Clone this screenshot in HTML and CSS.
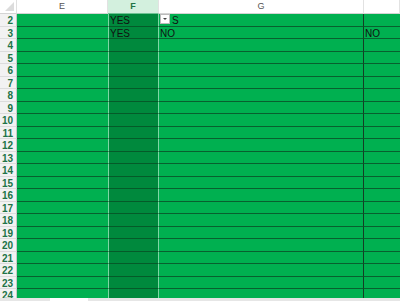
FILE: index.html
```html
<!DOCTYPE html>
<html lang="en">

<head>
    <meta charset="UTF-8">
    <title>Sheet</title>
    <link rel="stylesheet" href="styles.css">
</head>

<body>
    <div class="sheet">
        <div class="grid">
            <div class="row head">
                <div class="corner"><span class="tri"></span></div>
                <div class="col">E</div>
                <div class="col sel">F</div>
                <div class="col">G</div>
                <div class="col"></div>
            </div>
            <div class="row">
                <div class="rh">2</div>
                <div class="c"></div>
                <div class="c f">YES</div>
                <div class="c g"><span class="drop"><span class="arrow"></span></span>S</div>
                <div class="c"></div>
            </div>
            <div class="row">
                <div class="rh">3</div>
                <div class="c"></div>
                <div class="c f">YES</div>
                <div class="c g">NO</div>
                <div class="c">NO</div>
            </div>
            <div class="row"><div class="rh">4</div><div class="c"></div><div class="c f"></div><div class="c g"></div><div class="c"></div></div>
            <div class="row"><div class="rh">5</div><div class="c"></div><div class="c f"></div><div class="c g"></div><div class="c"></div></div>
            <div class="row"><div class="rh">6</div><div class="c"></div><div class="c f"></div><div class="c g"></div><div class="c"></div></div>
            <div class="row"><div class="rh">7</div><div class="c"></div><div class="c f"></div><div class="c g"></div><div class="c"></div></div>
            <div class="row"><div class="rh">8</div><div class="c"></div><div class="c f"></div><div class="c g"></div><div class="c"></div></div>
            <div class="row"><div class="rh">9</div><div class="c"></div><div class="c f"></div><div class="c g"></div><div class="c"></div></div>
            <div class="row"><div class="rh">10</div><div class="c"></div><div class="c f"></div><div class="c g"></div><div class="c"></div></div>
            <div class="row"><div class="rh">11</div><div class="c"></div><div class="c f"></div><div class="c g"></div><div class="c"></div></div>
            <div class="row"><div class="rh">12</div><div class="c"></div><div class="c f"></div><div class="c g"></div><div class="c"></div></div>
            <div class="row"><div class="rh">13</div><div class="c"></div><div class="c f"></div><div class="c g"></div><div class="c"></div></div>
            <div class="row"><div class="rh">14</div><div class="c"></div><div class="c f"></div><div class="c g"></div><div class="c"></div></div>
            <div class="row"><div class="rh">15</div><div class="c"></div><div class="c f"></div><div class="c g"></div><div class="c"></div></div>
            <div class="row"><div class="rh">16</div><div class="c"></div><div class="c f"></div><div class="c g"></div><div class="c"></div></div>
            <div class="row"><div class="rh">17</div><div class="c"></div><div class="c f"></div><div class="c g"></div><div class="c"></div></div>
            <div class="row"><div class="rh">18</div><div class="c"></div><div class="c f"></div><div class="c g"></div><div class="c"></div></div>
            <div class="row"><div class="rh">19</div><div class="c"></div><div class="c f"></div><div class="c g"></div><div class="c"></div></div>
            <div class="row"><div class="rh">20</div><div class="c"></div><div class="c f"></div><div class="c g"></div><div class="c"></div></div>
            <div class="row"><div class="rh">21</div><div class="c"></div><div class="c f"></div><div class="c g"></div><div class="c"></div></div>
            <div class="row"><div class="rh">22</div><div class="c"></div><div class="c f"></div><div class="c g"></div><div class="c"></div></div>
            <div class="row"><div class="rh">23</div><div class="c"></div><div class="c f"></div><div class="c g"></div><div class="c"></div></div>
            <div class="row"><div class="rh">24</div><div class="c"></div><div class="c f"></div><div class="c g"></div><div class="c"></div></div>
        </div>
        <div class="tabs"><span class="tab"></span></div>
    </div>
</body>

</html>
```

FILE: styles.css
```css
body {
    margin: 0;
    font-family: "Liberation Sans", Arial, sans-serif;
    background: #fff;
    overflow: hidden;
}

.sheet {
    width: 400px;
    height: 301px;
    display: flex;
    flex-direction: column;
}

.grid {
    height: 298px;
    overflow: hidden;
    flex: none;
}

.row {
    display: grid;
    grid-template-columns: 17px 91px 51px 205px 36px;
    grid-template-rows: 100%;
    height: 12px;
}

.row:nth-child(even) {
    height: 13px;
}

.row.head {
    height: 14px;
    background: #fff;
}

.corner {
    position: relative;
    border-right: 1px solid #e0e0e0;
    border-bottom: 1px solid #d4d4d4;
}

.tri {
    position: absolute;
    right: 2px;
    bottom: 2px;
    width: 0;
    height: 0;
    border-left: 9px solid transparent;
    border-bottom: 9px solid #dcdcdc;
}

.col {
    box-sizing: border-box;
    border-right: 1px solid #e2e2e2;
    border-bottom: 1px solid #d4d4d4;
    color: #555;
    font-size: 9px;
    text-align: center;
    line-height: 13px;
}

.col.sel {
    background: #d3f0de;
    color: #217346;
    border-bottom: 1px solid #6fc294;
    font-weight: bold;
}

.rh {
    box-sizing: border-box;
    background: #f2f2f2;
    border-bottom: 1px solid #dcdcdc;
    border-right: 1px solid #c8c8c8;
    color: #217346;
    font-size: 10px;
    font-weight: bold;
    text-align: right;
    padding: 1px 3px 0 0;
    line-height: 11px;
    overflow: hidden;
}

.c {
    box-sizing: border-box;
    background: #00b050;
    border-bottom: 1px solid #08602f;
    color: #111;
    font-size: 10px;
    line-height: 11px;
    padding: 1px 0 0 1px;
    overflow: hidden;
    white-space: nowrap;
}

.c.f {
    background: #00893d;
    border-left: 1px solid #7fd6a4;
    border-right: 1px solid #7fd6a4;
    border-bottom-color: #055a29;
}

.c.g {
    border-right: 1px solid #153d25;
    display: flex;
    align-items: flex-start;
    gap: 2px;
}

.drop {
    width: 10px;
    height: 10px;
    margin-top: -1px;
    background: #fff;
    border: 1px solid #bbb;
    box-sizing: border-box;
    display: flex;
    align-items: center;
    justify-content: center;
    flex: none;
}

.arrow {
    width: 0;
    height: 0;
    border-left: 2px solid transparent;
    border-right: 2px solid transparent;
    border-top: 2px solid #444;
}

.tabs {
    flex: 1;
    background: #e6e6e6;
    padding-left: 50px;
}

.tab {
    display: block;
    width: 38px;
    height: 100%;
    background: #fff;
}
```
